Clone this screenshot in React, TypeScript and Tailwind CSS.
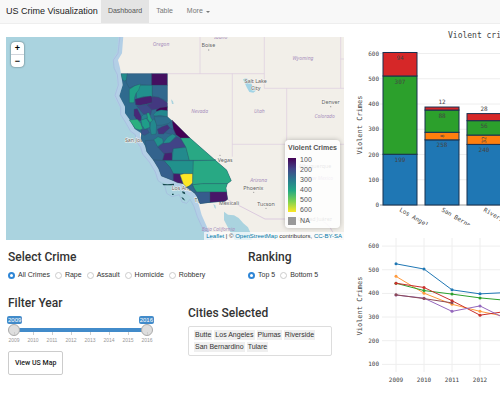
import React, { useState } from "react";

type Shape = { fill: string; points: string };

const counties: Shape[] = [
  { fill: "#228c8c", points: "93,41 112,41 110,60 103,63 97,58" },
  { fill: "#31688e", points: "112,41 185,41 185,76 150,74 135,77 118,84 108,66" },
  { fill: "#440f60", points: "185,41 232,41 232,76 185,76" },
  { fill: "#21908d", points: "138,82 150,76 187,76 187,110 160,110 140,116" },
  { fill: "#20a187", points: "118,88 135,77 152,72 146,90 138,100 134,112 132,128 118,128" },
  { fill: "#31688e", points: "187,76 232,76 232,125 220,118 205,112 187,108" },
  { fill: "#482070", points: "135,118 160,112 183,108 190,120 186,128 170,132 150,136 137,134" },
  { fill: "#433880", points: "186,110 205,112 220,120 232,128 232,142 205,146 185,150 170,134 186,128" },
  { fill: "#3e4a89", points: "140,137 170,134 185,150 182,164 160,162 150,150" },
  { fill: "#440154", points: "198,150 210,143 232,140 232,152 212,150 200,154" },
  { fill: "#482878", points: "132,148 142,146 148,158 155,172 152,182 140,180 132,166" },
  { fill: "#23888e", points: "190,164 198,155 214,150 232,152 232,170 210,166 194,168" },
  { fill: "#2ab07f", points: "118,180 142,178 152,190 158,206 150,210 136,206" },
  { fill: "#1f9e89", points: "153,180 168,174 178,188 180,202 164,208 156,196" },
  { fill: "#21a585", points: "170,160 177,158 182,172 188,182 180,188 172,176" },
  { fill: "#26828e", points: "160,164 170,162 172,174 155,180 154,170" },
  { fill: "#23898e", points: "182,186 192,176 200,192 198,222 184,224 180,204" },
  { fill: "#2d708e", points: "192,170 232,170 246,182 236,190 214,196 200,196" },
  { fill: "#3b528b", points: "154,210 172,208 178,218 164,226 154,222" },
  { fill: "#46327e", points: "202,208 216,200 232,194 240,204 220,222 206,222" },
  { fill: "#365c8d", points: "224,218 240,204 252,210 256,226 240,222" },
  { fill: "#440154", points: "246,180 300,234 272,234 258,224 250,206" },
  { fill: "#21918c", points: "190,240 204,230 218,236 220,248 202,260 194,252" },
  { fill: "#228d8d", points: "220,248 232,232 248,222 258,228 240,248 226,258" },
  { fill: "#414487", points: "204,262 220,250 240,248 260,230 272,236 288,262 250,266 246,278 222,282" },
  { fill: "#33638d", points: "165,242 192,240 204,262 222,282 218,301 190,300 170,274" },
  { fill: "#238a8d", points: "250,266 288,262 298,301 246,301" },
  { fill: "#472070", points: "224,280 246,278 246,301 218,301" },
  { fill: "#29a884", points: "272,234 300,234 376,301 298,301 288,262" },
  { fill: "#21918c", points: "222,302 310,302 310,341 250,341 240,322" },
  { fill: "#355f8d", points: "190,300 222,302 240,322 250,341 250,362 214,348 206,326" },
  { fill: "#46196b", points: "250,341 270,342 274,360 280,371 262,368 250,362" },
  { fill: "#fde725", points: "270,344 282,341 308,341 308,368 298,378 290,382 280,372" },
  { fill: "#28a984", points: "310,302 376,301 410,330 424,362 412,371 340,371 308,374" },
  { fill: "#27a983", points: "308,374 340,371 412,371 408,384 410,396 320,396 312,384" },
  { fill: "#31688e", points: "290,382 306,374 316,394 312,398" },
  { fill: "#365c8d", points: "312,397 360,396 360,427 330,431 324,414" },
  { fill: "#481668", points: "360,396 410,396 413,418 405,424 360,427" },
];

const stateLabels: [string, number, number][] = [
  ["Oregon", 213, -43],
  ["Idaho", 392, -64],
  ["Nevada", 329, 158],
  ["Wyoming", 639, 1],
  ["Utah", 508, 160],
  ["Colorado", 704, 175],
  ["Arizona", 506, 366],
  ["New Mexico", 690, 360],
  ["Baja California", 385, 513],
];

const cityLabels: [string, number, number][] = [
  ["Boise", 355, -38],
  ["Salt Lake", 497, 68],
  ["City", 497, 89],
  ["Denver", 722, 133],
  ["Albuquerque", 675, 325],
  ["Phoenix", 490, 390],
  ["Tucson", 528, 438],
  ["Ciudad Juárez", 675, 484],
];

const overlapLabels: [string, number, number][] = [
  ["San Jose", 136, 247],
  ["Las Vegas", 391, 305],
  ["Los Angeles", 290, 390],
  ["Tijuana", 341, 427],
  ["Mexicali", 417, 434],
];

const coast =
  "93,41 98,75 88,108 105,140 105,160 118,178 134,207 150,215 150,235 165,258 170,275 190,300 206,326 214,348 250,362 280,374 300,390 318,404 326,433 335,465 355,510 370,540";

function CrimeMap() {
  return (
    <svg
      viewBox="-252 -69 1014 609"
      preserveAspectRatio="xMidYMid slice"
      className="block h-[203px] w-full bg-[#aad3df] font-['Noto_Sans',sans-serif]"
      role="img"
      aria-label="Map of violent crimes by county"
    >
      <polyline
        points={"100,-72 96,-20 84,0 90,24 " + coast}
        fill="none"
        stroke="#b3cfe6"
        strokeWidth="30"
        strokeLinejoin="round"
      />
      <polyline
        points="90,-72 84,-20 70,0 72,24 82,44 85,75 75,106 92,142 92,164 106,186 122,214 136,224 138,242 152,262 158,282 178,306 196,336 204,362 224,376 230,400 246,410 268,404 276,426 290,430 300,418 312,440 322,470 342,514 354,540"
        fill="none"
        stroke="#a5b8de"
        strokeWidth="2"
        strokeLinejoin="round"
      />
      <polygon points={"100,-72 96,-20 84,0 90,24 " + coast + " 770,545 770,-72"} fill="#f2efe9" />
      <path
        d="M402 455 414 464 432 466 446 474 460 490 474 502 482 520 486 545H437L415 505 402 480Z"
        fill="#aad3df"
      />
      <path d="M459 58 470 54 482 66 488 80 498 92 490 98 478 96 470 82Z" fill="#a3d4e6" />
      <path d="M243 118 249 124 251 132 246 132ZM370 432 376 436 378 446 374 444Z" fill="#aad3df" />
      <g fill="none" stroke="#dccbdf" strokeWidth="2">
        <path d="M93 41H330V-72M330 41H523M427 41V290M523-72V85H762M752-72V85M752-3H762M590 85V478M427 253H762" />
        <path d="M413 419 525 477H680Q715 484 730 520" strokeWidth="3" />
      </g>
      <g fill="#a98fbd" fontSize="15" fontStyle="italic" textAnchor="middle">
        {stateLabels.map(([name, x, y]) => (
          <text key={name} x={x} y={y}>
            {name}
          </text>
        ))}
      </g>
      <g fill="#606060" stroke="#f7f5f1" strokeWidth="3" paintOrder="stroke" fontSize="16" textAnchor="middle">
        {[...cityLabels, ...overlapLabels].map(([name, x, y]) => (
          <text key={name} x={x} y={y}>
            {name}
          </text>
        ))}
      </g>
      <g fill="#a0a0a0">
        <circle cx="356" cy="-30" r="2" />
        <circle cx="722" cy="140" r="2" />
        <circle cx="390" cy="286" r="2" />
        <circle cx="491" cy="397" r="2" />
        <circle cx="528" cy="445" r="2" />
      </g>
      <polygon
        points="93,41 232,41 232,170 300,234 376,301 410,330 424,362 412,371 408,384 413,418 405,424 330,431 318,404 300,388 280,372 250,362 214,348 206,326 190,300 170,275 165,258 152,235 154,220 134,207 118,178 105,160 105,140 88,108 98,75"
        fill="#2f6a8e"
      />
      <g stroke="#2b5566" strokeWidth="1" strokeLinejoin="round">
        {counties.map((c) => (
          <polygon key={c.points} {...c} />
        ))}
      </g>
      <path
        d="M217 371 232 373 252 371 252 376 220 376ZM276 394 284 396 286 403 278 400ZM274 411 280 414 286 422 278 418ZM246 401H251V405H246Z"
        fill="#17494f"
      />
    </svg>
  );
}

const legendStops = ["100", "200", "300", "400", "500", "600"];

function MapPanel() {
  return (
    <div className="relative">
      <CrimeMap />
      <div className="absolute left-[5px] top-[5px] flex w-[13px] flex-col divide-y divide-gray-300 rounded-sm bg-white text-center text-[9px] font-bold leading-[12px] text-black shadow-[0_0_2px_rgba(0,0,0,0.6)]">
        <button aria-label="Zoom in">+</button>
        <button aria-label="Zoom out">−</button>
      </div>
      <div className="absolute bottom-[12px] right-[4px] rounded-sm bg-white/85 px-[3px] pb-[2px] pt-[3px] text-[7px] leading-[10px] text-[#555] shadow-[0_0_5px_rgba(0,0,0,0.25)]">
        <div className="font-bold">Violent Crimes</div>
        <div className="mt-[2px] flex gap-1">
          <div className="flex py-[3px]">
            <div className="w-2 bg-[linear-gradient(#440154,#414487_20%,#2a788e_40%,#22a884_60%,#7ad151_80%,#fde725)]" />
          </div>
          <div className="flex flex-col">
            {legendStops.map((s) => (
              <span key={s}>{s}</span>
            ))}
          </div>
        </div>
        <div className="mt-px flex items-center gap-1">
          <span className="size-2 bg-[#999]" />
          <span>NA</span>
        </div>
      </div>
      <div className="absolute bottom-0 right-0 bg-white/70 px-[2px] text-[6px] leading-[8px] text-[#333]">
        <a href="#leaflet" className="text-[#0078a8]">Leaflet</a> | ©{" "}
        <a href="#osm" className="text-[#0078a8]">OpenStreetMap</a> contributors,{" "}
        <a href="#license" className="text-[#0078a8]">CC-BY-SA</a>
      </div>
    </div>
  );
}

const heading = "font-[Roboto,sans-serif] text-[12px] font-medium leading-[14px] text-[#333]";

function RadioGroup({ title, name, options }: { title: string; name: string; options: string[] }) {
  const [value, setValue] = useState(options[0]);
  return (
    <fieldset className="min-w-0">
      <legend className={heading}>{title}</legend>
      <div className="mt-[6px] flex gap-[5px] text-[7px] leading-[10px] text-[#333]">
        {options.map((o) => (
          <label key={o} className="flex items-center gap-[3px] whitespace-nowrap">
            <input
              type="radio"
              name={name}
              checked={value === o}
              onChange={() => setValue(o)}
              className="size-[7px] appearance-none rounded-full border border-[#ccc] bg-white checked:border-2 checked:border-[#2f86d6]"
            />
            {o}
          </label>
        ))}
      </div>
    </fieldset>
  );
}

const years = ["2009", "2010", "2011", "2012", "2013", "2014", "2015", "2016"];

const rangeStyle =
  "pointer-events-none col-start-1 row-start-1 h-3 w-full appearance-none bg-transparent [&::-webkit-slider-thumb]:pointer-events-auto [&::-webkit-slider-thumb]:size-3 [&::-webkit-slider-thumb]:appearance-none [&::-webkit-slider-thumb]:rounded-full [&::-webkit-slider-thumb]:border [&::-webkit-slider-thumb]:border-[#aaa] [&::-webkit-slider-thumb]:bg-[#dedede]";

function YearFilter() {
  const [from, setFrom] = useState(2009);
  const [to, setTo] = useState(2016);
  return (
    <div>
      <h2 className={heading}>Filter Year</h2>
      <div className="mt-[6px] w-[145px]">
        <div className="flex justify-between text-[6px] leading-[8px] text-white">
          <output className="-ml-[1px] rounded-xs bg-[#428bca] px-[1px]">{from}</output>
          <output className="-mr-[1px] rounded-xs bg-[#428bca] px-[1px]">{to}</output>
        </div>
        <div className="grid items-center">
          <div className="col-start-1 row-start-1 mx-[6px] h-1 bg-[#428bca]" />
          <input
            type="range"
            aria-label="First year"
            min={2009}
            max={2016}
            value={from}
            onChange={(e) => setFrom(Math.min(+e.target.value, to))}
            className={rangeStyle}
          />
          <input
            type="range"
            aria-label="Last year"
            min={2009}
            max={2016}
            value={to}
            onChange={(e) => setTo(Math.max(+e.target.value, from))}
            className={rangeStyle}
          />
        </div>
        <div className="flex justify-between text-[5px] leading-[6px] text-[#999]">
          {years.map((y) => (
            <span key={y} className="flex w-3 flex-col items-center">
              <span className="-mt-1 h-[3px] w-px bg-[#ccc]" />
              <span className="mt-[2px]">{y}</span>
            </span>
          ))}
        </div>
      </div>
      <button className="mt-2 rounded-xs border border-[#ccc] bg-white px-[6px] py-[6px] font-[Roboto,sans-serif] text-[7px] font-medium leading-[10px] text-[#222]">
        View US Map
      </button>
    </div>
  );
}

const cities = ["Butte", "Los Angeles", "Plumas", "Riverside", "San Bernardino", "Tulare"];

function CitiesSelected() {
  return (
    <div className="mt-[10px] pr-3">
      <h2 className={heading}>Cities Selected</h2>
      <ul className="mt-[6px] flex flex-wrap gap-x-[2px] gap-y-[2px] rounded-xs border border-[#ddd] px-[5px] py-[3px] text-[7px] leading-[10px] text-[#333]">
        {cities.map((c) => (
          <li key={c} className="bg-[#efefef] px-px">
            {c}
          </li>
        ))}
      </ul>
    </div>
  );
}

const mono = "font-['DejaVu_Sans_Mono',monospace]";
const barY = (v: number) => 181 - v * 0.2525;

const bars = [
  { city: "Los Angeles", x: 39, parts: [["#1f77b4", 201], ["#2ca02c", 310], ["#d62728", 93]] },
  { city: "San Bernardino", x: 81, parts: [["#1f77b4", 258], ["#ff7f0e", 30], ["#2ca02c", 88], ["#d62728", 12]] },
  { city: "Riverside", x: 123, parts: [["#1f77b4", 240], ["#ff7f0e", 37], ["#2ca02c", 57], ["#d62728", 28]] },
] as { city: string; x: number; parts: [string, number][] }[];

const barLabels: [string, number, number][] = [
  ["94", 56, 36],
  ["307", 56, 60],
  ["199", 56, 138],
  ["12", 98, 80],
  ["88", 98, 94],
  ["258", 98, 123],
  ["28", 140, 87],
  ["56", 140, 104],
  ["240", 140, 128],
];

function BarChart() {
  return (
    <svg className={"block h-[201px] w-full " + mono} fontSize="6" fill="#444" role="img" aria-label="Violent crimes by city">
      <text x="104" y="14" fontSize="8">
        Violent crimes
      </text>
      <text transform="translate(18 101) rotate(-90)" textAnchor="middle" fontSize="7">
        Violent Crimes
      </text>
      {[0, 100, 200, 300, 400, 500, 600].map((v) => (
        <g key={v}>
          <line x1="36" x2="100%" y1={barY(v)} y2={barY(v)} stroke={v ? "#eee" : "#999"} />
          <text x="35" y={barY(v) + 2} textAnchor="end">
            {v}
          </text>
        </g>
      ))}
      {bars.map((b) => {
        let total = 0;
        return (
          <g key={b.city}>
            {b.parts.map(([fill, v]) => {
              total += v;
              return <rect key={fill} x={b.x} y={barY(total)} width="34" height={v * 0.2525} fill={fill} stroke="#17304f" />;
            })}
            <text transform={`translate(${b.x + 16} 187) rotate(30)`}>{b.city}</text>
          </g>
        );
      })}
      {barLabels.map(([t, x, y]) => (
        <text key={t} x={x} y={y} textAnchor="middle">
          {t}
        </text>
      ))}
      <text transform="translate(100 112) rotate(-90)" textAnchor="middle" fontSize="5">
        8
      </text>
      <text transform="translate(142 116) rotate(-90)" textAnchor="middle">
        32
      </text>
    </svg>
  );
}

const series = [
  { color: "#1f77b4", values: [525, 503, 415, 398, 404] },
  { color: "#ff9a3c", values: [472, 401, 354, 324, 300] },
  { color: "#2ca02c", values: [443, 412, 397, 381, 370] },
  { color: "#c9302c", values: [443, 425, 369, 308, 325] },
  { color: "#9467bd", values: [393, 380, 324, 347, 288] },
  { color: "#8c4a55", values: [394, 378, 360] },
];

const lineX = (i: number) => 52 + i * 28;
const lineY = (v: number) => 163 - v * 0.2365;

function LineChart() {
  return (
    <svg className={"block h-[175px] w-full " + mono} fontSize="6" fill="#444" role="img" aria-label="Violent crimes by year">
      <text transform="translate(18 81) rotate(-90)" textAnchor="middle" fontSize="7">
        Violent Crimes
      </text>
      {[100, 200, 300, 400, 500, 600].map((v) => (
        <g key={v}>
          <line x1="38" x2="100%" y1={lineY(v)} y2={lineY(v)} stroke="#eee" />
          <text x="35" y={lineY(v) + 2} textAnchor="end">
            {v}
          </text>
        </g>
      ))}
      {years.slice(0, 5).map((y, i) => (
        <g key={y}>
          <line x1={lineX(i)} x2={lineX(i)} y1="13" y2="147" stroke="#eee" />
          <text x={lineX(i)} y="157" textAnchor="middle">
            {y}
          </text>
        </g>
      ))}
      {series.map((s) => (
        <g key={s.color}>
          <polyline points={s.values.map((v, i) => `${lineX(i)},${lineY(v)}`).join(" ")} fill="none" stroke={s.color} />
          {s.values.map((v, i) => (
            <circle key={i} cx={lineX(i)} cy={lineY(v)} r="1.5" fill={s.color} />
          ))}
        </g>
      ))}
    </svg>
  );
}

export default function App() {
  return (
    <div className="min-h-screen overflow-hidden bg-white font-['Liberation_Sans',Arial,sans-serif]">
      <header className="flex h-6 items-stretch border-b border-[#eee] bg-[#f8f8f8] pl-[6px]">
        <a href="#home" className="flex items-center pr-[3px] text-[9px] text-[#222]">
          US Crime Visualization
        </a>
        <nav className="flex text-[7px] text-[#777]">
          <a href="#dashboard" className="flex items-center bg-[#e4e4e4] px-[7px] text-[#555]">
            Dashboard
          </a>
          <a href="#table" className="flex items-center px-[7px]">
            Table
          </a>
          <button className="flex items-center gap-[3px] px-[7px]">
            More
            <span className="border-x-2 border-t-2 border-x-transparent border-t-[#777]" />
          </button>
        </nav>
      </header>
      <main className="grid grid-cols-[minmax(0,338fr)_minmax(0,156fr)] pl-[6px]">
        <section className="pt-[13px]">
          <MapPanel />
          <div className="grid grid-cols-[240fr_96fr] pl-[2px] pt-[10px]">
            <RadioGroup title="Select Crime" name="crime" options={["All Crimes", "Rape", "Assault", "Homicide", "Robbery"]} />
            <RadioGroup title="Ranking" name="ranking" options={["Top 5", "Bottom 5"]} />
          </div>
          <div className="grid grid-cols-[180fr_156fr] pl-[2px] pt-4">
            <YearFilter />
            <CitiesSelected />
          </div>
        </section>
        <section>
          <BarChart />
          <LineChart />
        </section>
      </main>
    </div>
  );
}
